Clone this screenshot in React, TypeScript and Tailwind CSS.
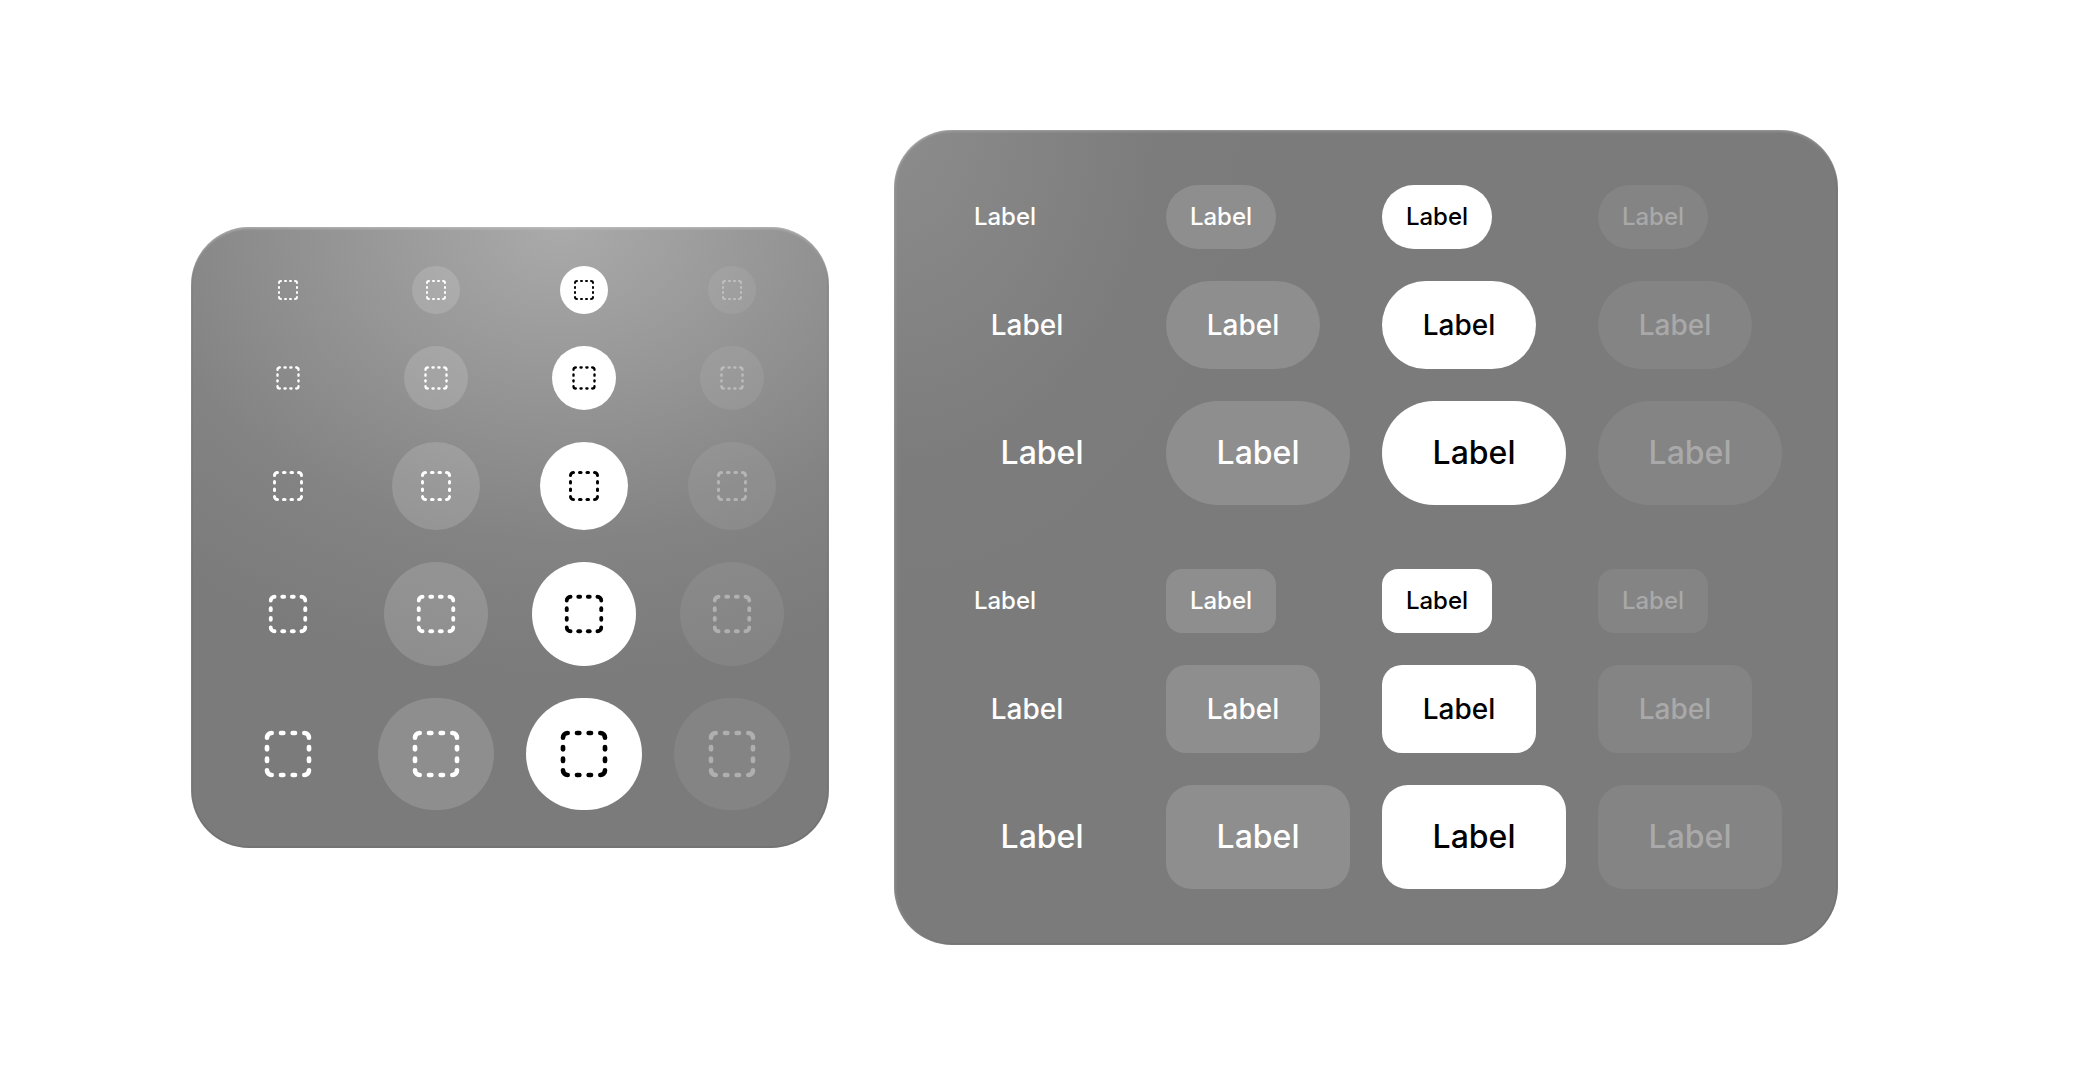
import React from 'react';

const font = { fontFamily: 'Inter, "Noto Sans", sans-serif' };

const DashedSquare = ({ size, className }: { size: number; className: string }) => (
  <svg
    width={size}
    height={size}
    viewBox="0 0 24 24"
    fill="none"
    stroke="currentColor"
    strokeWidth={2}
    strokeLinecap="round"
    strokeLinejoin="round"
    className={className}
  >
    <path d="M5 3a2 2 0 0 0-2 2" />
    <path d="M19 3a2 2 0 0 1 2 2" />
    <path d="M21 19a2 2 0 0 1-2 2" />
    <path d="M5 21a2 2 0 0 1-2-2" />
    <path d="M9 3h1" />
    <path d="M9 21h1" />
    <path d="M14 3h1" />
    <path d="M14 21h1" />
    <path d="M3 9v1" />
    <path d="M21 9v1" />
    <path d="M3 14v1" />
    <path d="M21 14v1" />
  </svg>
);

const iconRows = [
  { box: 'w-[48px] h-[48px]', icon: 24 },
  { box: 'w-[64px] h-[64px]', icon: 28 },
  { box: 'w-[88px] h-[88px]', icon: 36 },
  { box: 'w-[104px] h-[104px]', icon: 46 },
  { box: 'w-[116px] h-[112px]', icon: 56 },
];

const IconPanel = () => {
  return (
    <div className="w-[638px] rounded-[58px] bg-[radial-gradient(ellipse_110%_85%_at_58%_0%,#aaaaaa_0%,#939393_35%,#838383_60%,#7b7b7b_85%)] shadow-[inset_0_2px_2px_rgba(255,255,255,0.3),inset_0_0_0_2px_rgba(0,0,0,0.06)] pl-[39px] pr-[39px] pt-[39px] pb-[38px] flex flex-col gap-8">
      {iconRows.map((r, i) => (
        <div key={i} className="grid grid-cols-[repeat(4,116px)] gap-x-8 justify-items-center">
          <div className={`${r.box} flex items-center justify-center`}>
            <DashedSquare size={r.icon} className="text-white" />
          </div>
          <div className={`${r.box} rounded-full bg-white/15 flex items-center justify-center`}>
            <DashedSquare size={r.icon} className="text-white" />
          </div>
          <div className={`${r.box} rounded-full bg-white flex items-center justify-center`}>
            <DashedSquare size={r.icon} className="text-black" />
          </div>
          <div className={`${r.box} rounded-full bg-white/[0.07] flex items-center justify-center`}>
            <DashedSquare size={r.icon} className="text-white/35" />
          </div>
        </div>
      ))}
    </div>
  );
};

const labelRows = [
  { box: 'w-[110px] h-[64px]', text: 'text-[24px]', pill: 'rounded-full', sq: 'rounded-[16px]' },
  { box: 'w-[154px] h-[88px]', text: 'text-[28px]', pill: 'rounded-full', sq: 'rounded-[20px]' },
  { box: 'w-[184px] h-[104px]', text: 'text-[32px]', pill: 'rounded-full', sq: 'rounded-[26px]' },
];

const LabelRow = ({ box, text, shape }: { box: string; text: string; shape: string }) => (
  <div className="grid grid-cols-[repeat(4,183px)] gap-x-[33px]">
    <div className={`${box} ${text} flex items-center justify-center font-[550] text-white`}>Label</div>
    <div className={`${box} ${text} ${shape} flex items-center justify-center font-[550] text-white bg-[#8e8e8e]`}>Label</div>
    <div className={`${box} ${text} ${shape} flex items-center justify-center font-[550] text-black bg-white`}>Label</div>
    <div className={`${box} ${text} ${shape} flex items-center justify-center font-[550] text-[#a9a9a9] bg-[#848484]`}>Label</div>
  </div>
);

const LabelPanel = () => {
  return (
    <div className="w-[944px] rounded-[58px] bg-[radial-gradient(ellipse_40%_60%_at_0%_0%,#8c8c8c_0%,#7c7c7c_70%,#7b7b7b_100%)] shadow-[inset_0_2px_2px_rgba(255,255,255,0.2),inset_2px_0_2px_rgba(255,255,255,0.15),inset_0_0_0_2px_rgba(0,0,0,0.05)] pl-[56px] pr-[57px] pt-[55px] pb-[56px] flex flex-col gap-16">
      <div className="flex flex-col gap-8">
        {labelRows.map((r, i) => (
          <LabelRow key={i} box={r.box} text={r.text} shape={r.pill} />
        ))}
      </div>
      <div className="flex flex-col gap-8">
        {labelRows.map((r, i) => (
          <LabelRow key={i} box={r.box} text={r.text} shape={r.sq} />
        ))}
      </div>
    </div>
  );
};

export default function App() {
  return (
    <div className="w-[2090px] h-[1074px] bg-white flex items-center pl-[191px] gap-[65px]" style={font}>
      <IconPanel />
      <LabelPanel />
    </div>
  );
}
